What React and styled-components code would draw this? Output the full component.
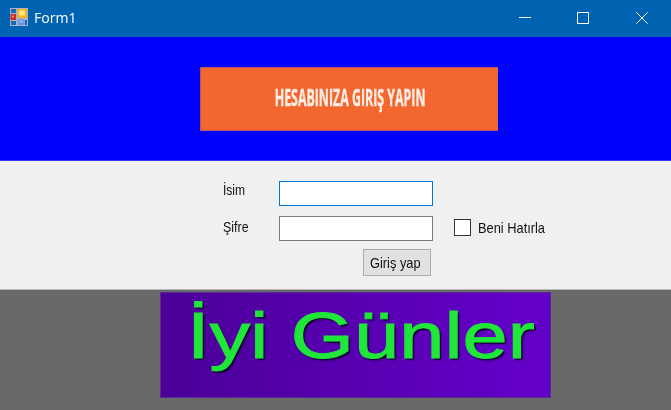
import React from "react";
import styled, { createGlobalStyle } from "styled-components";

const GlobalStyle = createGlobalStyle`
  * { box-sizing: border-box; }
  body { margin: 0; overflow: hidden; }
`;

const Window = styled.div`
  width: 671px;
  height: 410px;
  display: flex;
  flex-direction: column;
  background: #f0f0f0;
  font-family: "Liberation Sans", Arial, sans-serif;
  color: #111;
`;

const TitleBar = styled.header`
  height: 37px;
  flex: none;
  display: flex;
  align-items: flex-start;
  padding: 8px 0 0 10px;
  background: #0063b1;
  color: #fff;
`;

const Title = styled.h1`
  margin: -1px auto 0 6px;
  font: 400 15px/20px "Open Sans", "Noto Sans", sans-serif;
`;

const Squeeze = styled.span`
  display: inline-block;
  white-space: nowrap;
  transform: scaleX(${(p) => p.$x});
  transform-origin: ${(p) => p.$origin || "left"} center;
`;

const CaptionButton = styled.button`
  width: 58.5px;
  height: 20px;
  padding: 0;
  border: 0;
  background: none;
  display: flex;
  align-items: center;
  justify-content: center;
`;

const Header = styled.section`
  height: 124px;
  flex: none;
  padding: 30px 0 0 200px;
  background: #0000ff;
  border-bottom: 1px solid #3333f6;
`;

const Banner = styled.div`
  width: 298px;
  height: 64px;
  display: flex;
  justify-content: center;
  align-items: center;
  background: #f3672f;
  border: 1px solid #b95068;
  border-right: 0;
  color: #ffeee6;
  font: 700 22.5px/30px "Open Sans", sans-serif;
  padding: 0 0 2px 1px;
  -webkit-text-stroke: 0.4px #ffeee6;
`;

const BannerText = styled(Squeeze)`
  filter: blur(0.45px);
`;

const Form = styled.form`
  height: 129px;
  flex: none;
  display: grid;
  grid-template-columns: 56px 154px 1fr;
  grid-template-rows: 25px 25px 27px;
  row-gap: 10px;
  padding: 20px 0 0 223px;
  border-bottom: 1px solid #b8b8b8;
  font-size: 15px;
  line-height: 18px;
`;

const Label = styled.label`
  padding-top: ${(p) => p.$top}px;
  white-space: nowrap;
  font-size: ${(p) => p.$size || 15}px;
`;

const Field = styled.input`
  width: 154px;
  height: 25px;
  margin: 0;
  padding: 2px 5px;
  border: 1px solid ${(p) => (p.$active ? "#0078d7" : "#7a7a7a")};
  border-radius: 0;
  background: #fff;
  outline: none;
  font: inherit;
`;

const CheckRow = styled.label`
  display: flex;
  align-items: flex-start;
  padding: 3px 0 0 21px;
  gap: 7px;
`;

const CheckBox = styled.input`
  appearance: none;
  flex: none;
  width: 17px;
  height: 17px;
  margin: 0;
  border: 1px solid #333;
  background: #fff;
`;

const Submit = styled.button`
  grid-column: 2;
  justify-self: end;
  width: 68px;
  height: 27px;
  margin: -2px 2px 0 0;
  padding: 1px 0 0 5.5px;
  border: 1px solid #adadad;
  background: #e1e1e1;
  color: #111;
  font: 15px/18px "Liberation Sans", Arial, sans-serif;
  text-align: left;
`;

const Footer = styled.footer`
  flex: 1;
  padding: 2px 0 0 160px;
  background: #696969;
`;

const Greeting = styled.div`
  width: 391px;
  height: 106px;
  padding-left: 26px;
  background: linear-gradient(90deg, #4b0098, #6200c6 90%);
  border: 1px solid #5a2a92;
  color: #20e63a;
  font-size: 64px;
  line-height: 87px;
  -webkit-text-stroke: 0.9px #20e63a;
  text-shadow: 1.5px 1.5px 1.5px #10042c;
`;

function FormIcon() {
  return (
    <svg width="18" height="18" viewBox="0 0 18 18">
      <rect width="18" height="18" fill="#a9b4c2" />
      <rect x="1" y="1" width="5" height="4" fill="#176bb5" />
      <rect x="1" y="13" width="5" height="4" fill="#176bb5" />
      <rect x="0.5" y="6" width="5.5" height="6" fill="#c62f2b" />
      <rect x="2" y="7.5" width="2" height="2" fill="#ef8a78" />
      <rect x="7.5" y="1" width="9.5" height="9" fill="#f0b51f" />
      <rect x="9" y="2.5" width="6" height="5" fill="#ffe477" />
      <rect x="7.5" y="11.5" width="7" height="5.5" fill="#6595e5" />
      <rect x="9" y="12.5" width="4" height="2" fill="#92b9f5" />
      <rect x="15" y="12" width="2" height="5" fill="#176bb5" />
    </svg>
  );
}

function Glyph({ d }) {
  return (
    <svg width="12" height="12" viewBox="0 0 12 12" fill="none" stroke="#fff">
      <path d={d} />
    </svg>
  );
}

export default function App() {
  return (
    <Window>
      <GlobalStyle />
      <TitleBar>
        <FormIcon />
        <Title><Squeeze $x={0.94}>Form1</Squeeze></Title>
        <CaptionButton aria-label="Minimize"><Glyph d="M0 5.5H12" /></CaptionButton>
        <CaptionButton aria-label="Maximize"><Glyph d="M.5 .5H11.5V11.5H.5Z" /></CaptionButton>
        <CaptionButton aria-label="Close"><Glyph d="M.4 .4L11.6 11.6M11.6 .4L.4 11.6" /></CaptionButton>
      </TitleBar>
      <Header>
        <Banner><BannerText $x={0.55} $origin="center">HESABINIZA GIRIŞ YAPIN</BannerText></Banner>
      </Header>
      <Form onSubmit={(e) => e.preventDefault()}>
        <Label htmlFor="isim" $top={0} $size={14}><Squeeze $x={0.86}>İsim</Squeeze></Label>
        <Field id="isim" $active />
        <span />
        <Label htmlFor="sifre" $top={2}><Squeeze $x={0.83}>Şifre</Squeeze></Label>
        <Field id="sifre" type="password" />
        <CheckRow><CheckBox type="checkbox" /><Squeeze $x={0.855}>Beni Hatırla</Squeeze></CheckRow>
        <Submit><Squeeze $x={0.855}>Giriş yap</Squeeze></Submit>
      </Form>
      <Footer>
        <Greeting><Squeeze $x={1.27}>İyi Günler</Squeeze></Greeting>
      </Footer>
    </Window>
  );
}
